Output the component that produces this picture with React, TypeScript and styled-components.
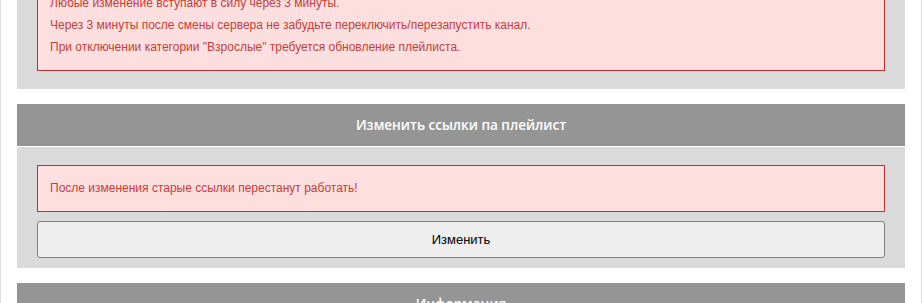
import styled, { createGlobalStyle } from 'styled-components';

const GlobalStyle = createGlobalStyle`
  html, body {
    margin: 0;
    padding: 0;
    background: #ffffff;
    overflow: hidden;
  }
`;

const Page = styled.div`
  box-sizing: border-box;
  width: 922px;
  min-height: 420px;
  margin-top: -38px;
  padding: 0 16px;
  border-left: 1px solid #dddddd;
  border-right: 1px solid #dddddd;
  font-family: 'Liberation Sans', Arial, sans-serif;
`;

const Panel = styled.section`
  margin-bottom: 15px;
`;

const PanelHeader = styled.div`
  height: 42px;
  border-bottom: 1px solid #ffffff;
  background: #959595;
  color: #ffffff;
  display: flex;
  align-items: center;
  justify-content: center;
  font-family: 'Open Sans', 'Liberation Sans', sans-serif;
  font-size: 13.5px;
  font-weight: 600;
`;

const PanelBody = styled.div<{ padBottom?: number }>`
  display: flex;
  flex-direction: column;
  gap: 9px;
  padding: 18px 20px ${(props) => props.padBottom ?? 18}px;
  background: #dadada;
`;

const Alert = styled.div`
  padding: 11px 12px 12px;
  border: 1px solid #b83232;
  background: #fddfdf;
  color: #c2403a;
  font-size: 12px;
  line-height: 22px;
`;

const AlertLine = styled.p`
  margin: 0;
`;

const Button = styled.button`
  height: 37px;
  border: 1px solid #7f7f7f;
  border-radius: 3px;
  background: #eeeeee;
  color: #000000;
  font-family: 'Liberation Sans', Arial, sans-serif;
  font-size: 13px;
  cursor: pointer;
`;

export default function App() {
  return (
    <>
      <GlobalStyle />
      <Page>
        <Panel>
          <PanelBody>
            <Alert>
              <AlertLine>Любые изменение вступают в силу через 3 минуты.</AlertLine>
              <AlertLine>
                Через 3 минуты после смены сервера не забудьте переключить/перезапустить канал.
              </AlertLine>
              <AlertLine>
                При отключении категории "Взрослые" требуется обновление плейлиста.
              </AlertLine>
            </Alert>
          </PanelBody>
        </Panel>

        <Panel>
          <PanelHeader>Изменить ссылки па плейлист</PanelHeader>
          <PanelBody padBottom={10}>
            <Alert>
              <AlertLine>После изменения старые ссылки перестанут работать!</AlertLine>
            </Alert>
            <Button type="button">Изменить</Button>
          </PanelBody>
        </Panel>

        <Panel>
          <PanelHeader>Информация</PanelHeader>
        </Panel>
      </Page>
    </>
  );
}
